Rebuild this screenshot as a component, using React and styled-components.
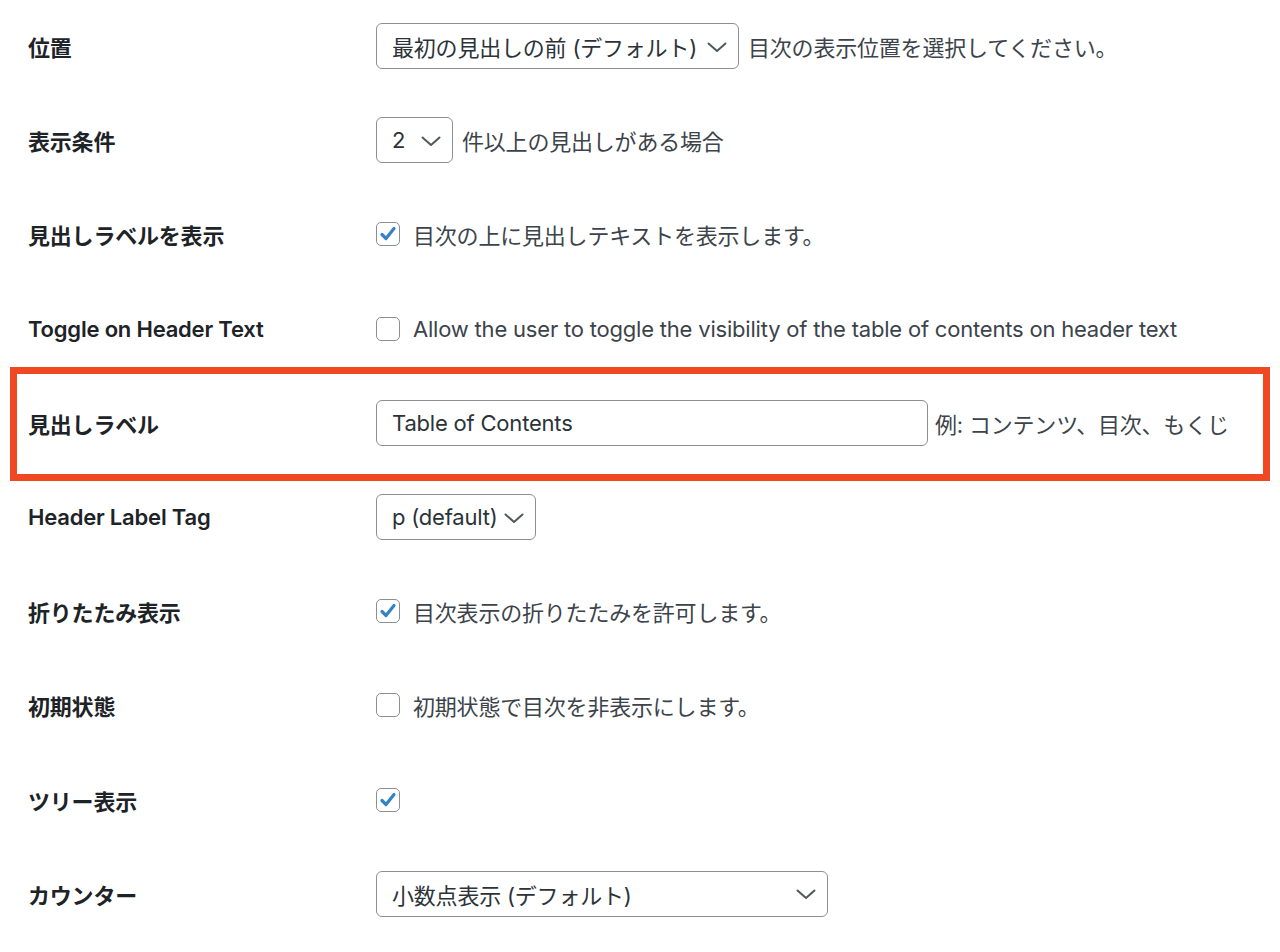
import styled, { createGlobalStyle } from "styled-components";

const GlobalStyle = createGlobalStyle`
  body {
    margin: 0;
    background: #fff;
    font-family: "Inter", "Noto Sans CJK JP", sans-serif;
    letter-spacing: -0.2px;
    color: #3c434a;
  }
`;

const rows = [
  { label: "位置", kind: "select", value: "最初の見出しの前 (デフォルト)", width: 363, note: "目次の表示位置を選択してください。" },
  { label: "表示条件", kind: "select", value: "2", width: 77, note: "件以上の見出しがある場合" },
  { label: "見出しラベルを表示", kind: "check", checked: true, note: "目次の上に見出しテキストを表示します。" },
  { label: "Toggle on Header Text", kind: "check", checked: false, note: "Allow the user to toggle the visibility of the table of contents on header text" },
  { label: "見出しラベル", kind: "input", value: "Table of Contents", note: "例: コンテンツ、目次、もくじ", marked: true },
  { label: "Header Label Tag", kind: "select", value: "p (default)", width: 160 },
  { label: "折りたたみ表示", kind: "check", checked: true, note: "目次表示の折りたたみを許可します。" },
  { label: "初期状態", kind: "check", checked: false, note: "初期状態で目次を非表示にします。" },
  { label: "ツリー表示", kind: "check", checked: true },
  { label: "カウンター", kind: "select", value: "小数点表示 (デフォルト)", width: 452 },
];

const Chevron = () => (
  <svg width="20" height="20" viewBox="0 0 20 20" fill="none">
    <path d="M1.5 6.5 L10 14 L18.5 6.5" stroke="#50575e" strokeWidth="2" strokeLinecap="round" strokeLinejoin="round" />
  </svg>
);

const Tick = () => (
  <svg width="18" height="18" viewBox="0 0 18 18" fill="none">
    <path d="M3 9.5 L7 13.5 L15 3.5" stroke="#3582c4" strokeWidth="3.2" strokeLinecap="round" strokeLinejoin="round" />
  </svg>
);

const App = () => {
  return (
    <>
      <GlobalStyle />
      <Table>
        {rows.map((row) => (
          <Row key={row.label} $marked={row.marked}>
            <Label>{row.label}</Label>
            <Field $gap={row.kind === "check" ? 13 : row.kind === "input" ? 7 : 9}>
              {row.kind === "select" && (
                <Select $width={row.width}>
                  <SelectValue>{row.value}</SelectValue>
                  <Chevron />
                </Select>
              )}
              {row.kind === "input" && <TextInput>{row.value}</TextInput>}
              {row.kind === "check" && <CheckBox>{row.checked && <Tick />}</CheckBox>}
              {row.note && <Note>{row.note}</Note>}
            </Field>
          </Row>
        ))}
      </Table>
    </>
  );
};

const Table = styled.div`
  display: flex;
  flex-direction: column;
  margin-top: -1px;
  padding-left: 28px;
`;

const Row = styled.div`
  position: relative;
  display: grid;
  grid-template-columns: 348px 1fr;
  align-items: center;
  height: 94.2px;

  ${(p) =>
    p.$marked &&
    `
    &::after {
      content: "";
      position: absolute;
      left: -18px;
      right: 10px;
      top: -9px;
      bottom: -11px;
      border: 7px solid #ef4823;
      pointer-events: none;
    }
  `}
`;

const Label = styled.div`
  font-size: 22px;
  font-weight: 600;
  color: #1d2327;
  white-space: nowrap;
`;

const Field = styled.div`
  display: flex;
  align-items: center;
  gap: ${(p) => p.$gap}px;
`;

const Select = styled.div`
  box-sizing: border-box;
  width: ${(p) => p.$width}px;
  height: 46px;
  display: flex;
  align-items: center;
  gap: 6px;
  padding: 0 11px 0 15px;
  border: 1.5px solid #8c8f94;
  border-radius: 6px;
  font-size: 22px;
  color: #2c3338;
  white-space: nowrap;

  svg {
    flex-shrink: 0;
    margin-top: 1px;
  }
`;

const SelectValue = styled.span`
  flex: 1;
  min-width: 0;
`;

const TextInput = styled.div`
  box-sizing: border-box;
  width: 552px;
  height: 46px;
  display: flex;
  align-items: center;
  padding: 0 15px;
  border: 1.5px solid #8c8f94;
  border-radius: 6px;
  font-size: 22px;
  color: #2c3338;
`;

const CheckBox = styled.div`
  box-sizing: border-box;
  width: 24px;
  height: 24px;
  display: flex;
  align-items: center;
  justify-content: center;
  border: 1.5px solid #8c8f94;
  border-radius: 5px;
  background: #fff;
  flex-shrink: 0;
`;

const Note = styled.span`
  font-size: 22px;
  color: #3c434a;
  white-space: nowrap;
`;

export default App;
